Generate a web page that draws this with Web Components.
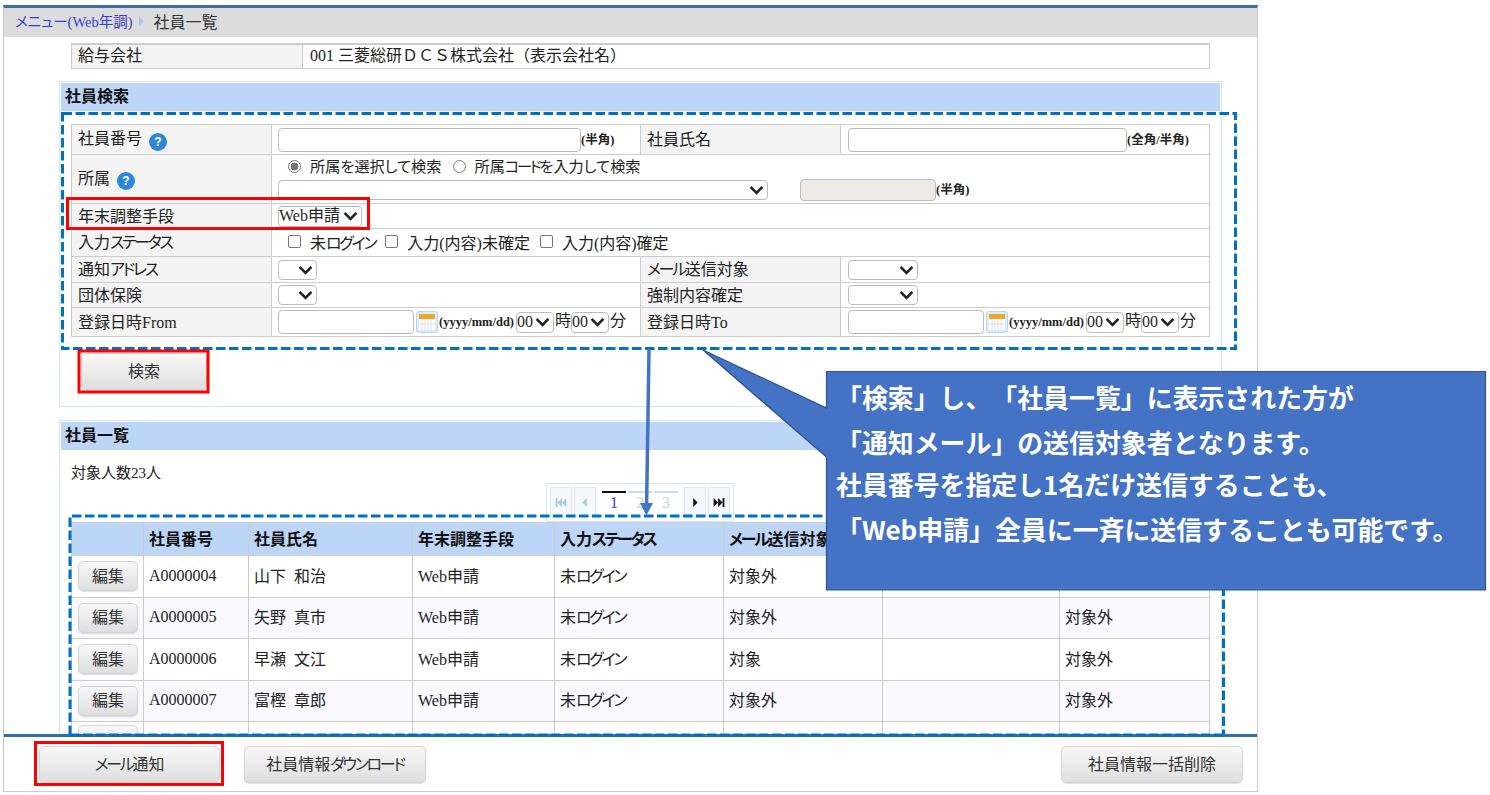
<!DOCTYPE html>
<html lang="ja">
<head>
<meta charset="utf-8">
<title>社員一覧</title>
<style>
  html, body { margin: 0; padding: 0; background: #fff; }
  body {
    width: 1490px; height: 795px; overflow: hidden; position: relative;
    font-family: "Liberation Serif", "Noto Sans CJK JP", serif;
    font-size: 16px; color: #222;
    font-feature-settings: "palt";
    text-spacing-trim: space-all;
  }
  .k { letter-spacing: -2.3px; }
</style>
</head>
<body>

<app-frame>
  <bread-crumb slot="crumb"></bread-crumb>
  <company-row></company-row>
  <panel-box heading="社員検索" style="height:326px">
    <search-form></search-form>
    <ui-button style="--w:126px;--h:37px;margin:16px 0 0 10px">検索</ui-button>
  </panel-box>
  <panel-box heading="社員一覧" style="margin-top:13px">
    <div style="height:20px;line-height:20px;font-size:15px;margin-top:0">対象人数23人</div>
    <pager-bar></pager-bar>
    <employee-table></employee-table>
  </panel-box>
  <ui-button slot="foot" style="--w:181px;--h:37px;margin-left:35px"><span class="k">メール</span>通知</ui-button>
  <ui-button slot="foot" style="--w:182px;--h:37px;margin-left:24px">社員情報<span class="k">ダウンロード</span></ui-button>
  <ui-button slot="foot" style="--w:182px;--h:37px;margin-left:auto">社員情報一括削除</ui-button>
</app-frame>

<note-layer></note-layer>

<script>
// small helper, every element just stamps its markup in an open shadow root
class Base extends HTMLElement {
  constructor() {
    super();
    this.attachShadow({ mode: 'open' });
  }
  // the old screens use a font with narrow kana, so kana runs get tightened
  render(html, kana = true) {
    const t = document.createElement('template');
    t.innerHTML = kana
      ? html.replace(/[ァ-ヶー]+/g, m => `<span class="k">${m}</span>`) + '<style>.k{letter-spacing:-2.3px}</style>'
      : html;
    this.shadowRoot.appendChild(t.content.cloneNode(true));
  }
}

class AppFrame extends Base {
  connectedCallback() {
    this.render(`
      <style>
        :host { display: flex; flex-direction: column; box-sizing: border-box; width: 1255px; height: 787px;
                margin: 5px 0 0 3px; border: 1px solid #ccc; border-top: 3px solid #3b6ea5; }
        main { flex: 1; min-height: 0; overflow: hidden; padding-top: 6px; }
        footer { display: flex; align-items: center; box-sizing: border-box; height: 57px; flex: none;
                 border-top: 3px solid #2f6fb0; padding: 0 14px 0 0; }
      </style>
      <slot name="crumb"></slot>
      <main><slot></slot></main>
      <footer><slot name="foot"></slot></footer>`);
  }
}

class BreadCrumb extends Base {
  connectedCallback() {
    this.render(`
      <style>
        :host { display: flex; align-items: center; box-sizing: border-box; height: 29px; background: #dcdcdc; padding: 0 0 4px 11px; flex: none; }
        a { color: #3a3ad8; font-size: 14.5px; text-decoration: none; }
        svg { margin: 0 8px 0 6px; }
        span { font-size: 16px; color: #333; }
      </style>
      <a>メニュー(Web年調)</a>
      <svg width="7" height="10" viewBox="0 0 7 10"><path d="M1 0l5 5-5 5z" fill="#a9c4ee"/></svg>
      <span>社員一覧</span>`, false);
  }
}

class CompanyRow extends Base {
  connectedCallback() {
    this.render(`
      <style>
        :host { display: flex; box-sizing: border-box; width: 1139px; height: 26px; margin-left: 67px;
                border: 1px solid #ccc; border-top-width: 2px; line-height: 22px; }
        b { font-weight: 400; width: 231px; box-sizing: border-box; padding-left: 6px; background: #f4f4f4; border-right: 1px solid #ccc; }
        span { padding-left: 7px; font-size: 16px; font-feature-settings: normal; }
      </style>
      <b>給与会社</b><span>001 三菱総研ＤＣＳ株式会社（表示会社名）</span>`);
  }
}

class PanelBox extends Base {
  connectedCallback() {
    this.render(`
      <style>
        :host { display: block; box-sizing: border-box; width: 1163px; margin: 12px 0 0 55px;
                border: 1px solid #d6e4f9; padding: 1px; }
        h2 { margin: 0; height: 28px; line-height: 27px; background: #bdd5f7; font-size: 16px; font-weight: 700; padding-left: 4px; color: #111; }
        div { padding: 13px 0 0 10px; }
      </style>
      <h2>${this.getAttribute('heading')}</h2>
      <div><slot></slot></div>`);
  }
}

class UiButton extends Base {
  connectedCallback() {
    this.render(`
      <style>
        :host { display: inline-flex; align-items: center; justify-content: center; box-sizing: border-box;
                width: var(--w); height: var(--h); border: 1px solid #d4d4d4; border-radius: 5px; padding-bottom: 3px;
                background: linear-gradient(#f8f8f8, #dedede); font-size: 16px; color: #333; box-shadow: 0 1px 1px #ddd; }
      </style>
      <slot></slot>`);
  }
}

class UiSelect extends Base {
  connectedCallback() {
    this.render(`
      <style>
        :host { display: inline-flex; align-items: center; justify-content: space-between; box-sizing: border-box;
                width: var(--w); height: var(--h, 20px); border: 1px solid #bbb; border-radius: 4px; background: #fff;
                padding: 0 3px 0 0; font-size: 16px; line-height: 18px; vertical-align: middle; overflow: hidden; }
        svg { flex: none; }
      </style>
      <span><slot></slot></span>
      <svg width="15" height="10" viewBox="0 0 15 10"><path d="M1.6 1.8l5.9 6 5.9-6" fill="none" stroke="#222" stroke-width="2.6"/></svg>`);
  }
}

class HelpIcon extends Base {
  connectedCallback() {
    this.render(`
      <style>
        :host { display: inline-flex; width: 18px; height: 18px; border-radius: 50%; background: #2f86d8; color: #fff;
                align-items: center; justify-content: center; font: 700 12px "Liberation Sans", sans-serif; vertical-align: middle; }
      </style>?`);
  }
}

class CalIcon extends Base {
  connectedCallback() {
    this.render(`
      <style>:host { display: inline-block; width: 22px; height: 22px; vertical-align: middle; } svg { display: block; }</style>
      <svg width="22" height="22" viewBox="0 0 22 22">
        <rect x=".5" y=".5" width="21" height="21" rx="2" fill="#dceafb" stroke="#bcd4f2"/>
        <rect x="3" y="3" width="16" height="5" fill="#eca829"/>
        <rect x="3" y="8" width="16" height="11" fill="#fdfdfd"/>
        <path d="M6 8v11M9 8v11M12 8v11M15 8v11M3 13h16" stroke="#d5dbe3" stroke-width=".8"/>
      </svg>`);
  }
}

class SearchForm extends Base {
  connectedCallback() {
    const dateCell = `
      <span class="date">
        <input class="d"><cal-icon></cal-icon><small>(yyyy/mm/dd)</small><ui-select style="--w:38px;--h:21px">00</ui-select><em>時</em><ui-select style="--w:38px;--h:21px">00</ui-select><em>分</em>
      </span>`;
    const check = t => `<i class="box"></i><span class="lb">${t}</span>`;
    this.render(`
      <style>
        :host { display: block; width: 1139px; }
        table { border-collapse: collapse; table-layout: fixed; width: 1138px; }
        td, th { border: 1px solid #ccc; padding: 0 0 0 6px; font-weight: 400; text-align: left; font-size: 16px; line-height: 18px; white-space: nowrap; overflow: hidden; }
        th { background: #f4f4f4; padding-top: 1px; }
        td.r { padding-left: 7px; }
        td.c { padding-top: 3px; }
        input { box-sizing: border-box; height: 24px; border: 1px solid #bbb; border-radius: 4px; padding: 0; margin: 0; vertical-align: middle; background: #fff; }
        input.d { width: 136px; margin-right: 2px; }
        small { font-size: 12.5px; font-weight: 700; }
        .date { display: flex; align-items: center; }
        .date small { margin: 0 1px; width: 76px; }
        .date em { font-style: normal; font-size: 16px; margin: -3px 1px 0; width: 15px; }
        .radio { display: inline-block; box-sizing: border-box; width: 13px; height: 13px; border: 1px solid #777; border-radius: 50%; vertical-align: -1px; margin: 0 9px 0 10px; background: #fff; }
        .radio.on { background: radial-gradient(circle, #777 0 3.6px, #fff 4.2px); }
        .box { display: inline-block; box-sizing: border-box; width: 13px; height: 13px; border: 1px solid #777; border-radius: 2px; margin: 0 9px 0 10px; vertical-align: 2px; }
        .lb { font-size: 16px; position: relative; top: -1px; }
        .rd { font-size: 15.2px; }
        help-icon { margin-left: 3px; position: relative; top: 1px; }
      </style>
      <table>
        <colgroup><col style="width:200px"><col style="width:369px"><col style="width:200px"><col style="width:369px"></colgroup>
        <tr style="height:30px">
          <th>社員番号 <help-icon></help-icon></th>
          <td><input style="width:303px"><small>(半角)</small></td>
          <th>社員氏名</th>
          <td class="r"><input style="width:279px"><small>(全角/半角)</small></td>
        </tr>
        <tr style="height:49px">
          <th>所属 <help-icon></help-icon></th>
          <td colspan="3" style="vertical-align:top;padding-top:2px">
            <div style="height:22px;line-height:20px"><i class="radio on"></i><span class="rd">所属を選択して検索</span><i class="radio" style="margin-left:11px"></i><span class="rd">所属コードを入力して検索</span></div>
            <div style="display:flex;align-items:center;height:22px">
              <ui-select style="--w:490px;--h:20px"></ui-select>
              <input disabled style="width:136px;height:22px;margin-left:32px;background:#eeebe7"><small>(半角)</small>
            </div>
          </td>
        </tr>
        <tr style="height:25px">
          <th>年末調整手段</th>
          <td colspan="3"><ui-select style="--w:84px;--h:21px">Web申請</ui-select></td>
        </tr>
        <tr style="height:28px">
          <th>入力ステータス</th>
          <td colspan="3" class="c">${check('未ログイン')}${check('入力(内容)未確定')}${check('入力(内容)確定')}</td>
        </tr>
        <tr style="height:26px">
          <th>通知アドレス</th><td><ui-select style="--w:39px"></ui-select></td>
          <th>メール送信対象</th><td class="r"><ui-select style="--w:70px"></ui-select></td>
        </tr>
        <tr style="height:25px">
          <th>団体保険</th><td><ui-select style="--w:39px"></ui-select></td>
          <th>強制内容確定</th><td class="r"><ui-select style="--w:70px"></ui-select></td>
        </tr>
        <tr style="height:29px">
          <th>登録日時From</th><td>${dateCell}</td>
          <th>登録日時To</th><td class="r">${dateCell}</td>
        </tr>
      </table>`);
  }
}

class PagerBar extends Base {
  connectedCallback() {
    const tri = (d, c) => `<svg width="12" height="9" viewBox="0 0 12 10"><path d="${d}" fill="${c}"/></svg>`;
    const first = 'M0 0h2v10H0zM7 0v10L2 5zM12 0v10L7 5z', prev = 'M8 0v10L3 5z';
    const next = 'M4 0v10l5-5z', last = 'M0 0v10l5-5zM5 0v10l5-5zM10 0h2v10h-2z';
    this.render(`
      <style>
        :host { display: flex; box-sizing: border-box; width: 188px; height: 39px; margin-left: 475px;
                border: 1px solid #d6e4f9; padding: 3px; background: #fff; position: relative; z-index: 1; }
        .b { box-sizing: border-box; width: 23px; height: 30px; border: 1px solid #d6e4f9; background: #f6f9fe;
             display: flex; align-items: center; justify-content: center; margin-right: 2px; }
        .n { width: 25px; margin: 4px 1px 0; height: 26px; border-top: 2px solid #c9dbf5; text-align: center;
             line-height: 20px; font-size: 16px; color: #c7d3e6; box-sizing: border-box; }
        .n.on { border-top-color: #111; color: #3a3ad8; }
      </style>
      <span class="b">${tri(first, '#a9c4ee')}</span>
      <span class="b" style="margin-right:5px">${tri(prev, '#a9c4ee')}</span>
      <span class="n on">1</span><span class="n">2</span><span class="n">3</span>
      <span class="b" style="margin-left:5px">${tri(next, '#111')}</span>
      <span class="b" style="margin-right:0">${tri(last, '#111')}</span>`);
  }
}

class EmployeeTable extends Base {
  connectedCallback() {
    const rows = [
      ['A0000004', '山下&ensp;和治', '対象外', ''],
      ['A0000005', '矢野&ensp;真市', '対象外', '対象外'],
      ['A0000006', '早瀬&ensp;文江', '対象', '対象外'],
      ['A0000007', '富樫&ensp;章郎', '対象外', '対象外'],
    ];
    const btn = t => `<ui-button style="--w:60px;--h:30px">${t}</ui-button>`;
    const body = rows.map(r => `
      <tr>
        <td class="e">${btn('編集')}</td><td class="id">${r[0]}</td><td>${r[1]}</td>
        <td>Web申請</td><td>未ログイン</td><td>${r[2]}</td><td></td><td>${r[3]}</td>
      </tr>`).join('');
    this.render(`
      <style>
        :host { display: block; width: 1139px; }
        table { border-collapse: collapse; table-layout: fixed; width: 1138px; }
        th, td { border: 1px solid #ccc; text-align: left; padding: 0 0 3px 5px; white-space: nowrap; overflow: hidden; box-sizing: border-box; }
        th { background: #bdd5f7; height: 33px; font-size: 16px; font-weight: 700; color: #111; }
        td { height: 41.5px; font-size: 16px; }
        tr:nth-child(even) td { background: #f9f9ff; }
        tr:nth-child(odd) td { background: #fff; }
        .e { padding: 0 0 0 6px; }
        .id { font-size: 16px; padding: 0 0 1px 5px; }
      </style>
      <table>
        <colgroup><col style="width:72px"><col style="width:105px"><col style="width:164px"><col style="width:142px"><col style="width:169px"><col style="width:159px"><col style="width:177px"><col style="width:150px"></colgroup>
        <thead><tr><th></th><th>社員番号</th><th>社員氏名</th><th>年末調整手段</th><th>入力ステータス</th><th>メール送信対象</th><th></th><th></th></tr></thead>
        <tbody>${body}<tr><td class="e"><ui-button style="--w:60px;--h:30px"></ui-button></td><td></td><td></td><td></td><td></td><td></td><td></td><td></td></tr></tbody>
      </table>`);
  }
}

// everything drawn over the screen: dashed frames, red marks, arrow, callout
class NoteLayer extends Base {
  connectedCallback() {
    this.render(`
      <style>
        :host { position: absolute; left: 0; top: 0; width: 1490px; height: 795px; pointer-events: none; z-index: 5; }
        svg { position: absolute; left: 0; top: 0; }
        .txt { position: absolute; left: 836px; top: 374px; width: 650px; color: #fff; font: 700 25.9px/45.3px "Noto Sans CJK JP", sans-serif; font-feature-settings: normal; white-space: nowrap; }
      </style>
      <svg width="1490" height="795" viewBox="0 0 1490 795" fill="none">
        <rect x="62.5" y="113.5" width="1173" height="235" stroke="#0070c0" stroke-width="3" stroke-dasharray="9.5 3.5"/>
        <path d="M70 735V516H1223.5V735M70 735H1223.5" stroke="#0070c0" stroke-width="3" stroke-dasharray="9.5 3.5"/>
        <rect x="67.5" y="198.5" width="301" height="30" stroke="#f00" stroke-width="3"/>
        <rect x="79" y="351" width="129" height="41" stroke="#f00" stroke-width="3"/>
        <rect x="35.5" y="742.5" width="187" height="42" stroke="#f00" stroke-width="3"/>
        <path d="M649 349L646.6 505" stroke="#4472c4" stroke-width="3.5"/>
        <path d="M640 503h13l-6.6 12.5z" fill="#4472c4"/>
        <path d="M826.5 371.5H1485.5V590H826.5V457L703 350L826.5 408Z" fill="#4472c4" stroke="#2f528f" stroke-width="1.2"/>
      </svg>
      <div class="txt">
        <div>「検索」し、「社員一覧」に表示された方が</div>
        <div>「通知メール」の送信対象者となります。</div>
        <div style="margin-top:-4px">社員番号を指定し1名だけ送信することも、</div>
        <div>「Web申請」全員に一斉に送信することも可能です。</div>
      </div>`, false);
  }
}

customElements.define('app-frame', AppFrame);
customElements.define('bread-crumb', BreadCrumb);
customElements.define('company-row', CompanyRow);
customElements.define('panel-box', PanelBox);
customElements.define('ui-button', UiButton);
customElements.define('ui-select', UiSelect);
customElements.define('help-icon', HelpIcon);
customElements.define('cal-icon', CalIcon);
customElements.define('search-form', SearchForm);
customElements.define('pager-bar', PagerBar);
customElements.define('employee-table', EmployeeTable);
customElements.define('note-layer', NoteLayer);
</script>
</body>
</html>
